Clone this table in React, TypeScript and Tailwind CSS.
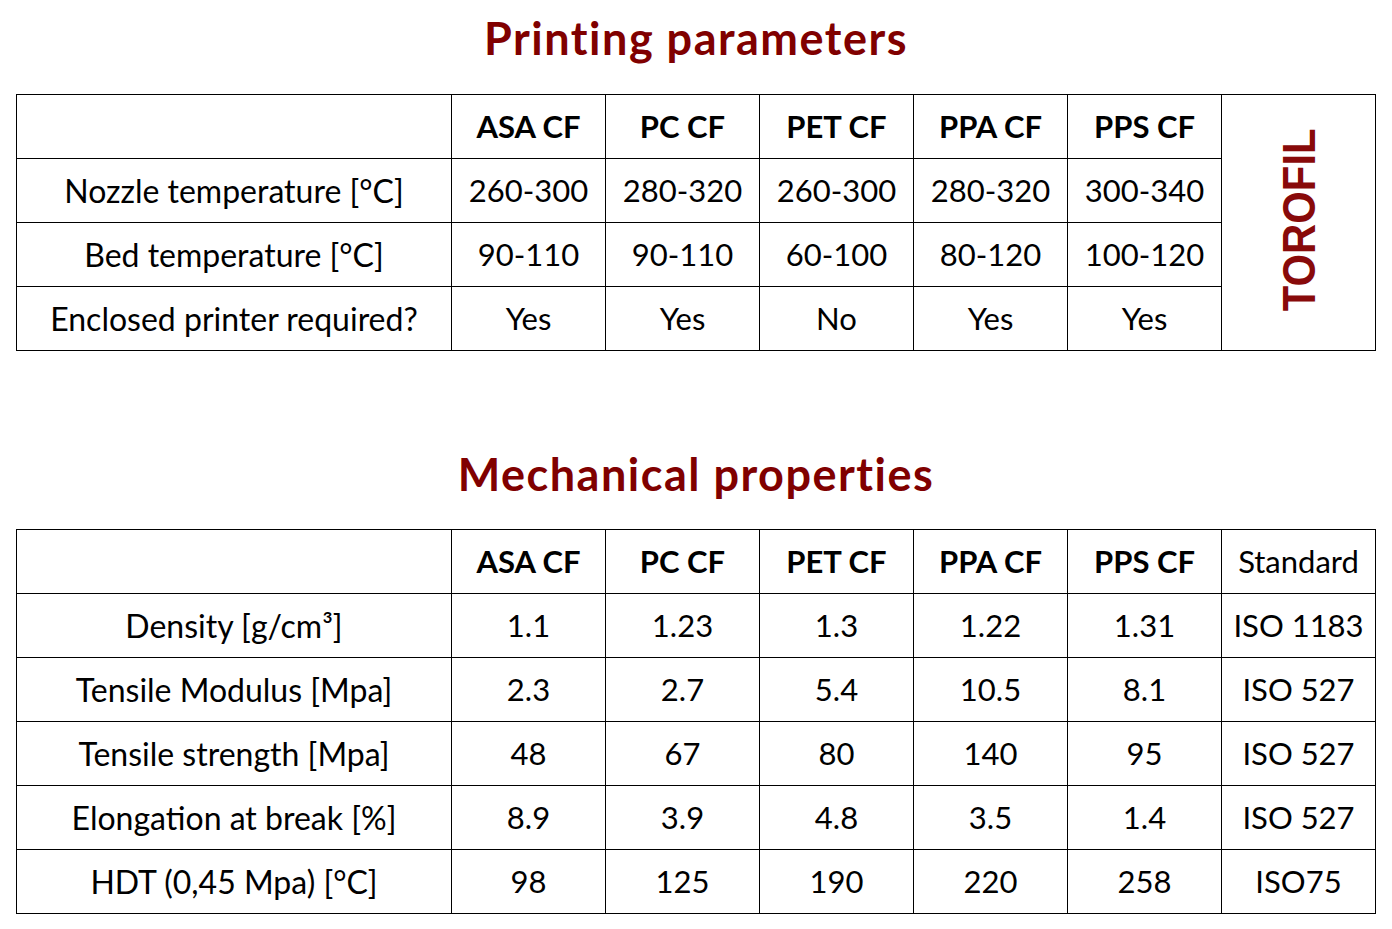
import React from 'react';

const materials = ['ASA CF', 'PC CF', 'PET CF', 'PPA CF', 'PPS CF'];

const printing: { label: string; values: string[] }[] = [
  { label: 'Nozzle temperature [°C]', values: ['260-300', '280-320', '260-300', '280-320', '300-340'] },
  { label: 'Bed temperature [°C]', values: ['90-110', '90-110', '60-100', '80-120', '100-120'] },
  { label: 'Enclosed printer required?', values: ['Yes', 'Yes', 'No', 'Yes', 'Yes'] },
];

const mechanical: { label: string; values: string[]; standard: string }[] = [
  { label: 'Density [g/cm³]', values: ['1.1', '1.23', '1.3', '1.22', '1.31'], standard: 'ISO 1183' },
  { label: 'Tensile Modulus [Mpa]', values: ['2.3', '2.7', '5.4', '10.5', '8.1'], standard: 'ISO 527' },
  { label: 'Tensile strength [Mpa]', values: ['48', '67', '80', '140', '95'], standard: 'ISO 527' },
  { label: 'Elongation at break [%]', values: ['8.9', '3.9', '4.8', '3.5', '1.4'], standard: 'ISO 527' },
  { label: 'HDT (0,45 Mpa) [°C]', values: ['98', '125', '190', '220', '258'], standard: 'ISO75' },
];

const cell = 'h-[64px] border-l border-t border-black flex items-center justify-center whitespace-nowrap';

function Title({ children }: { children: React.ReactNode }) {
  return (
    <h2 className="text-center text-[45px] font-bold leading-none text-[#800000] tracking-[1.5px]">
      {children}
    </h2>
  );
}

export default function App() {
  return (
    <div className="min-h-screen bg-white text-black font-['Lato','Liberation_Sans',sans-serif] text-[31px]">
      {/* Printing parameters */}
      <div className="pt-[16px] h-[94px]">
        <Title>Printing parameters</Title>
      </div>
      <div className="ml-[16px] w-[1360px] grid grid-cols-[435px_repeat(6,154px)] border-r border-b border-black">
        <div className={cell} />
        {materials.map((m) => (
          <div key={m} className={`${cell} font-bold`}>{m}</div>
        ))}
        <div className="row-span-4 border-l border-t border-black flex items-center justify-center">
          <span className="inline-block -rotate-90 scale-x-[0.89] font-['Liberation_Sans',sans-serif] font-bold text-[47px] leading-none text-[#880a0a] pl-[6px]">
            TOROFIL
          </span>
        </div>
        {printing.map((row) => (
          <React.Fragment key={row.label}>
            <div className={`${cell} text-[32px]`}>{row.label}</div>
            {row.values.map((v, i) => (
              <div key={i} className={cell}>{v}</div>
            ))}
          </React.Fragment>
        ))}
      </div>

      {/* Mechanical properties */}
      <div className="pt-[101px] h-[178px]">
        <Title>Mechanical properties</Title>
      </div>
      <div className="ml-[16px] w-[1360px] grid grid-cols-[435px_repeat(6,154px)] border-r border-b border-black">
        <div className={cell} />
        {materials.map((m) => (
          <div key={m} className={`${cell} font-bold`}>{m}</div>
        ))}
        <div className={cell}>Standard</div>
        {mechanical.map((row) => (
          <React.Fragment key={row.label}>
            <div className={`${cell} text-[32px]`}>{row.label}</div>
            {row.values.map((v, i) => (
              <div key={i} className={cell}>{v}</div>
            ))}
            <div className={cell}>{row.standard}</div>
          </React.Fragment>
        ))}
      </div>
    </div>
  );
}
